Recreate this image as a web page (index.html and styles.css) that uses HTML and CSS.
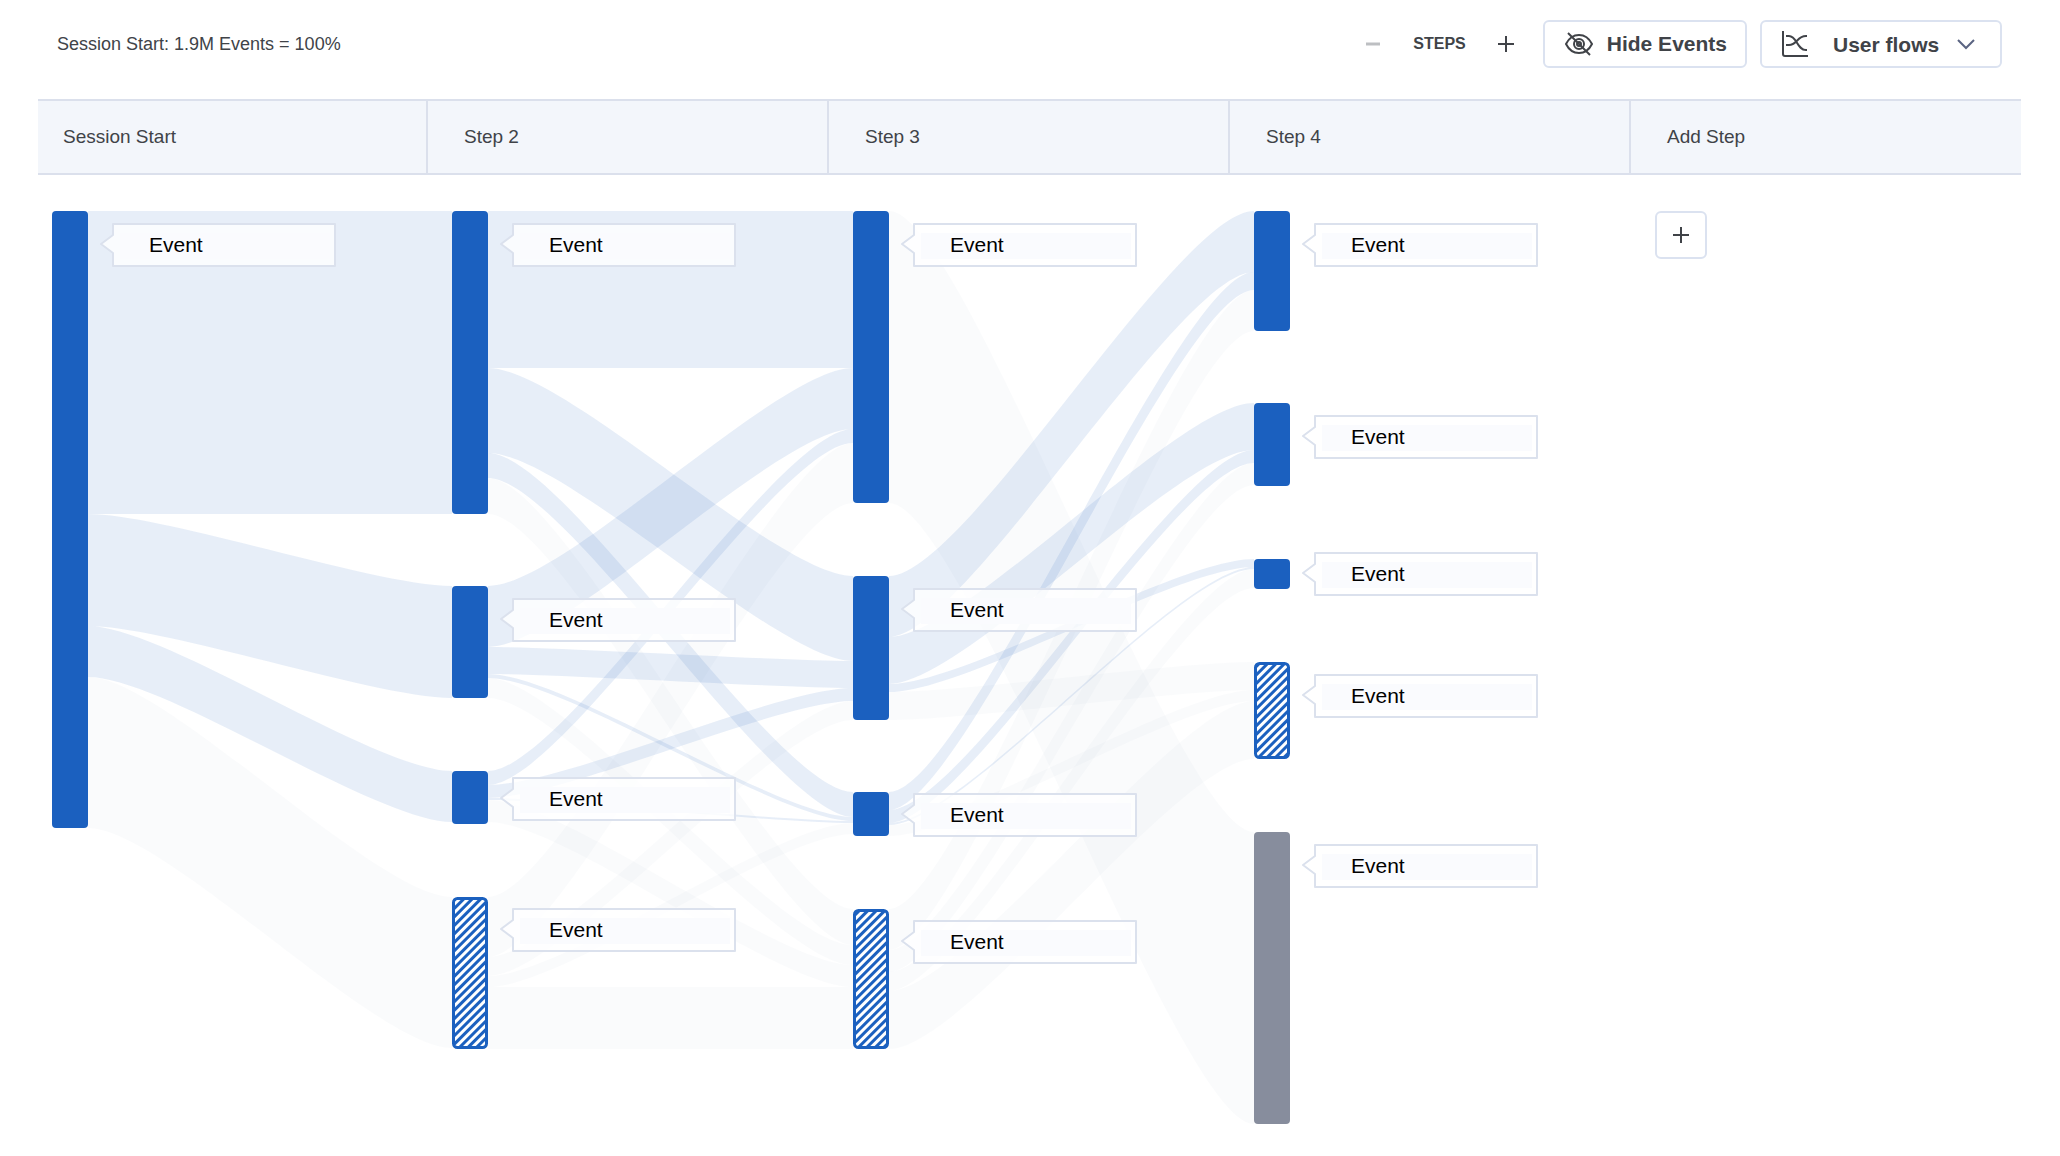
FILE: index.html
```html
<!DOCTYPE html>
<html lang="en">
<head>
<meta charset="utf-8">
<title>User flows</title>
<link rel="stylesheet" href="styles.css">
</head>
<body>

  <header class="toolbar">
    <p class="summary">Session Start: 1.9M Events = 100%</p>
    <div class="steps">
      <button class="step-btn" type="button" aria-label="Remove step" disabled>
        <svg width="18" height="18" viewBox="0 0 18 18"><path d="M2 9h14"/></svg>
      </button>
      <span class="steps-title">STEPS</span>
      <button class="step-btn" type="button" aria-label="Add step">
        <svg width="18" height="18" viewBox="0 0 18 18"><path d="M1 9h16M9 1v16"/></svg>
      </button>
    </div>
    <button class="btn" type="button">
      <svg class="icon" width="28" height="28" viewBox="0 0 28 28">
        <path d="M1 14C4 8 9 5 14 5s10 3 13 9c-3 6-8 9-13 9s-10-3-13-9z"/>
        <circle cx="14" cy="14" r="5"/>
        <circle cx="14" cy="14" r="2"/>
        <path d="M3 3l22 22"/>
      </svg>
      Hide Events
    </button>
    <div class="select">
      <svg class="icon select-icon" width="28" height="28" viewBox="0 0 28 28">
        <path d="M2 1v23q0 2 2 2h23"/>
        <path d="M5 6h3c8 0 8 14 17 14h1"/>
        <path d="M5 15h3c8 0 8-9 17-9h1"/>
      </svg>
      <select aria-label="Chart type">
        <option>User flows</option>
      </select>
      <svg class="icon select-arrow" width="20" height="12" viewBox="0 0 20 12"><path d="M2 2l8 8 8-8"/></svg>
    </div>
  </header>

  <main class="flow">
    <div class="flow-head">
      <div>Session Start</div>
      <div>Step 2</div>
      <div>Step 3</div>
      <div>Step 4</div>
      <div>Add Step</div>
    </div>
    <div class="flow-body">
      <svg id="chart" class="chart" viewBox="0 -36 1591 960">
        <defs>
          <pattern id="hatch" width="6" height="6" patternUnits="userSpaceOnUse" patternTransform="rotate(-45)">
            <rect width="6" height="6" fill="#fff"/>
            <rect width="6" height="3" fill="#1b60bf"/>
          </pattern>
        </defs>
      </svg>
      <div class="add-cell">
        <button class="btn add-btn" type="button" aria-label="Add step">
          <svg class="icon" width="18" height="18" viewBox="0 0 18 18"><path d="M1 9h16M9 1v16"/></svg>
        </button>
      </div>
    </div>
  </main>

  <script src="script.js"></script>
</body>
</html>
```

FILE: styles.css
```css
* {
  box-sizing: border-box;
}
body {
  margin: 0;
  background: #fff;
  color: #404348;
  font-family: "Liberation Sans", Arial, sans-serif;
}
button, select {
  font-family: inherit;
  color: inherit;
}

.toolbar {
  display: flex;
  align-items: center;
  padding: 20px 58px 31px 57px;
}
.summary {
  margin: 0 auto 0 0;
  font-size: 18px;
}
.steps {
  display: flex;
  align-items: center;
  gap: 31px;
  margin-right: 28px;
}
.steps-title {
  font-size: 16px;
  font-weight: bold;
}
.step-btn {
  display: flex;
  padding: 0;
  border: 0;
  background: none;
}
.step-btn path {
  stroke: #404348;
  stroke-width: 2;
}
.step-btn:disabled path {
  stroke: #bdbfc2;
  stroke-width: 3;
}

.btn {
  display: flex;
  align-items: center;
  gap: 14px;
  height: 48px;
  padding: 0 18px 0 20px;
  border: 2px solid #dbe2f0;
  border-radius: 6px;
  background: #fff;
  font-size: 21px;
  font-weight: bold;
}
.icon {
  fill: none;
  stroke: #404348;
  stroke-width: 2;
}

.select {
  display: grid;
  align-items: center;
  width: 242px;
  margin-left: 13px;
}
.select > * {
  grid-area: 1 / 1;
}
.select select {
  appearance: none;
  width: 100%;
  height: 48px;
  padding: 0 48px 0 71px;
  border: 2px solid #dbe2f0;
  border-radius: 6px;
  background: #fff;
  font-size: 21px;
  font-weight: bold;
}
.select-icon {
  z-index: 1;
  margin-left: 21px;
  pointer-events: none;
}
.select-arrow {
  z-index: 1;
  justify-self: end;
  margin-right: 26px;
  stroke: #5a6482;
  pointer-events: none;
}

.flow {
  margin: 0 39px 0 38px;
}
.flow-head, .flow-body {
  display: grid;
  grid-template-columns: 388fr 401fr 401fr 401fr 392fr;
}
.flow-head {
  border-top: 2px solid #dbe0ec;
  border-bottom: 2px solid #dbe0ec;
  background: #f3f6fb;
  font-size: 19px;
  line-height: 72px;
}
.flow-head div {
  padding-left: 36px;
  border-left: 2px solid #dbe0ec;
}
.flow-head div:first-child {
  padding-left: 25px;
  border-left: 0;
}
.chart {
  grid-column: 1 / 5;
  width: 100%;
}
.add-cell {
  padding: 36px 26px;
}
.add-btn {
  justify-content: center;
  width: 52px;
  padding: 0;
}

/* sankey */
.link {
  fill: rgba(27, 96, 191, .105);
}
.link-other {
  fill: rgba(130, 150, 180, .04);
}
.node {
  fill: #1b60bf;
}
.node-other {
  fill: url(#hatch);
  stroke: #1b60bf;
  stroke-width: 3;
}
.node-exit {
  fill: #878d9d;
}
.label-box {
  fill: rgba(255, 255, 255, .8);
  stroke: #dbe1ed;
  stroke-width: 2;
}
.label-fill {
  fill: #fafbfe;
}
.label-text {
  fill: #000;
  font-size: 21px;
}
```

FILE: script.js
```js
'use strict';

var NODE_WIDTH = 36;
var CURVE = 76;

// y and h are the bar, label is the top of its callout.
var columns = [
  {x: 14, nodes: [
    {y: 0, h: 617, label: 13}
  ]},
  {x: 414, nodes: [
    {y: 0, h: 303, label: 13},
    {y: 375, h: 112, label: 388},
    {y: 560, h: 53, label: 567},
    {y: 686, h: 152, label: 698, type: 'other'}
  ]},
  {x: 815, nodes: [
    {y: 0, h: 292, label: 13},
    {y: 365, h: 144, label: 378},
    {y: 581, h: 44, label: 583},
    {y: 698, h: 140, label: 710, type: 'other'}
  ]},
  {x: 1216, nodes: [
    {y: 0, h: 120, label: 13},
    {y: 192, h: 83, label: 205},
    {y: 348, h: 30, label: 342},
    {y: 451, h: 97, label: 464, type: 'other'},
    {y: 621, h: 292, label: 634, type: 'exit'}
  ]}
];

// flows[column][source][target] = height of the band
var flows = [
  [[303, 112, 51, 151]],
  [[157, 85, 25, 36], [61, 27, 4, 20], [14, 13, 2, 22], [60, 19, 11, 62]],
  [[0, 0, 0, 0, 292], [61, 47, 8, 28], [18, 13, 2, 11], [41, 22, 19, 58]]
];

var chart = document.getElementById('chart');

function add(name, attrs, text) {
  var el = document.createElementNS('http://www.w3.org/2000/svg', name);
  for (var key in attrs) {
    el.setAttribute(key, attrs[key]);
  }
  if (text) {
    el.textContent = text;
  }
  chart.appendChild(el);
}

function drawLink(x0, y0, x1, y1, h, other) {
  var a = x0 + CURVE;
  var b = x1 - CURVE;
  add('path', {
    'class': other ? 'link-other' : 'link',
    d: 'M' + x0 + ' ' + y0 +
       'C' + a + ' ' + y0 + ' ' + b + ' ' + y1 + ' ' + x1 + ' ' + y1 +
       'v' + h +
       'C' + b + ' ' + (y1 + h) + ' ' + a + ' ' + (y0 + h) + ' ' + x0 + ' ' + (y0 + h) + 'z'
  });
}

function drawNode(x, node) {
  // the hatched bar has a border, so keep it inside the same box
  var inset = node.type == 'other' ? 1.5 : 0;
  add('rect', {
    'class': node.type ? 'node-' + node.type : 'node',
    x: x + inset,
    y: node.y + inset,
    width: NODE_WIDTH - 2 * inset,
    height: node.h - 2 * inset,
    rx: 4
  });
}

function drawLabel(x, y) {
  add('path', {
    'class': 'label-box',
    d: 'M' + x + ' ' + y + 'h222v42h-222v-13l-12 -9l12 -9z',
    'stroke-linejoin': 'round'
  });
  add('rect', {'class': 'label-fill', x: x + 7, y: y + 9, width: 210, height: 26});
  add('text', {'class': 'label-text', x: x + 36, y: y + 28}, 'Event');
}

flows.forEach(function(sources, c) {
  var left = columns[c];
  var right = columns[c + 1];
  var filled = right.nodes.map(function() { return 0; });
  sources.forEach(function(targets, s) {
    var used = 0;
    targets.forEach(function(h, t) {
      if (!h) {
        return;
      }
      var from = left.nodes[s];
      var to = right.nodes[t];
      drawLink(left.x + NODE_WIDTH, from.y + used, right.x, to.y + filled[t], h,
               from.type || to.type);
      used += h;
      filled[t] += h;
    });
  });
});

columns.forEach(function(column) {
  column.nodes.forEach(function(node) {
    drawNode(column.x, node);
    drawLabel(column.x + NODE_WIDTH + 25, node.label);
  });
});
```
